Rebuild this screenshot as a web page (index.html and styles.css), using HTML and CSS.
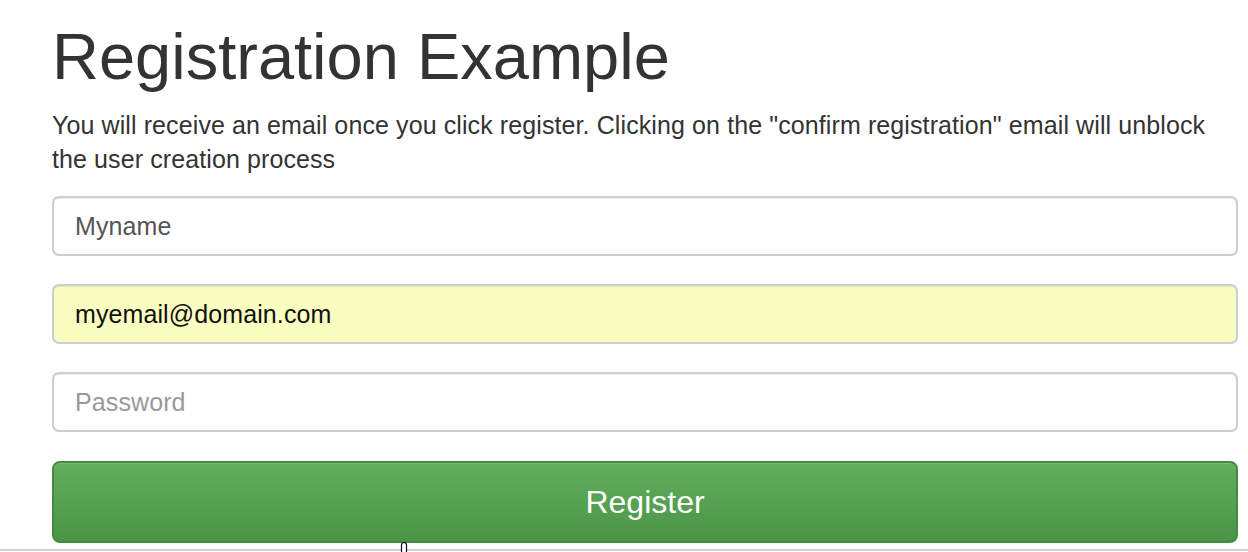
FILE: index.html
```html
<!DOCTYPE html>
<html lang="en">
<head>
<meta charset="utf-8">
<title>Registration Example</title>
<link rel="stylesheet" href="styles.css">
</head>
<body>
<div class="page">
  <main class="container">
    <h1 class="title">Registration Example</h1>
    <p class="lead">You will receive an email once you click register. Clicking on the "confirm registration" email will unblock the user creation process</p>
    <form class="form">
      <input class="field" type="text" value="Myname">
      <input class="field field-autofill" type="email" value="myemail@domain.com">
      <input class="field" type="password" placeholder="Password">
      <button class="btn" type="button">Register</button>
    </form>
  </main>
  <div class="bottom-rule"></div>
  <svg class="cursor" width="8" height="10" viewBox="0 0 8 10"><path d="M1.5 10 V3 A2.5 2.5 0 0 1 6.5 3 V10" fill="#fff" stroke="#0b0b2a" stroke-width="1.2"/></svg>
</div>
</body>
</html>
```

FILE: styles.css
```css
html, body {
  margin: 0;
  padding: 0;
  background: #fff;
}
body {
  font-family: "Liberation Sans", Arial, sans-serif;
  color: #333;
  overflow: hidden;
}
.page {
  position: relative;
  display: flow-root;
  height: 552px;
}
.container {
  padding: 21px 10px 0 52px;
}
.title {
  margin: 0;
  font-size: 65px;
  line-height: 71px;
  font-weight: 400;
  color: #333;
}
.lead {
  margin: 16px 0 0;
  font-size: 25px;
  letter-spacing: 0.1px;
  line-height: 34px;
  color: #333;
}
.form {
  display: flex;
  flex-direction: column;
  gap: 28px;
  margin-top: 20px;
}
.field {
  box-sizing: border-box;
  height: 60px;
  width: 100%;
  margin: 0;
  padding: 0 21px;
  border: 2px solid #cdcdcd;
  border-radius: 7px;
  background: #fff;
  box-shadow: inset 0 1px 1px rgba(0,0,0,.075);
  font-family: "Liberation Sans", Arial, sans-serif;
  font-size: 25px;
  letter-spacing: 0.1px;
  color: #555;
  outline: none;
}
.field::placeholder {
  color: #999;
}
.field-autofill {
  background: #fafdc0;
  color: #111;
}
.btn {
  box-sizing: border-box;
  height: 82px;
  width: 100%;
  margin-top: 1px;
  border: 2px solid #438c3f;
  border-radius: 8px;
  background: linear-gradient(to bottom, #62ae5e 0%, #4a9446 100%);
  box-shadow: inset 0 1px 0 rgba(255,255,255,.15);
  color: #fff;
  font-family: "Liberation Sans", Arial, sans-serif;
  font-size: 32px;
  cursor: pointer;
}
.bottom-rule {
  position: absolute;
  left: 0;
  right: 0;
  top: 549px;
  height: 2px;
  background: #cfcfcf;
}
.cursor {
  position: absolute;
  left: 400px;
  top: 542px;
}
```
